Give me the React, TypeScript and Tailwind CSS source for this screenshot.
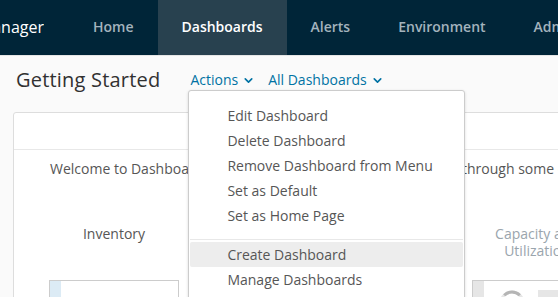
import { ChevronDown } from 'lucide-react'

const navItems = ['Home', 'Dashboards', 'Alerts', 'Environment', 'Administration']

const menuTop = ['Edit Dashboard', 'Delete Dashboard', 'Remove Dashboard from Menu', 'Set as Default', 'Set as Home Page']
const menuBottom = ['Create Dashboard', 'Manage Dashboards']

const tiles = [
  { title: 'Inventory', muted: false, strip: 'bg-[#dcebf5]' },
  { title: 'Workload Balance', muted: false, strip: 'bg-[#dcebf5]' },
  { title: 'Troubleshooting', muted: false, strip: 'bg-[#dcebf5]' },
  { title: 'Capacity and Utilization', muted: true, strip: 'bg-[#e6e6e6]' },
]

export default function App() {
  return (
    <div className="w-[558px] h-[297px] overflow-hidden bg-[#fafafa] font-['Open_Sans',sans-serif]">
      <header className="flex h-14 items-stretch bg-[#002538] border-b border-[#e5e5e5]">
        <div className="flex w-[44px] justify-end items-center overflow-hidden shrink-0 pb-[2px]">
          <span className="whitespace-nowrap text-[16px] text-white">Operations Manager</span>
        </div>
        <nav className="flex ml-[25px] whitespace-nowrap">
          {navItems.map(item => (
            <div
              key={item}
              className={`flex items-center px-6 pb-[2px] text-[14px] font-semibold ${
                item === 'Dashboards' ? 'bg-[#28414f] text-white' : 'text-[#a3b3bd]'
              }`}
            >
              {item}
            </div>
          ))}
        </nav>
      </header>

      <div className="flex items-start h-14 pl-4 pt-[10px]">
        <h1 className="text-[20px] leading-[28px] text-[#313131] tracking-[0.2px]">Getting Started</h1>
        <div className="relative ml-[30px] mt-[4px] flex items-center gap-[13px] text-[14px] leading-[20px] text-[#0072a3]">
          <button className="flex items-center gap-1">
            Actions <ChevronDown size={13} strokeWidth={3} />
          </button>
          <button className="flex items-center gap-1">
            All Dashboards <ChevronDown size={13} strokeWidth={3} />
          </button>

          <div className="absolute left-[-2px] top-[20px] z-10 w-[277px] rounded-[3px] border border-[#cccccc] bg-white pt-3 pb-3 shadow-[0_1px_3px_rgba(0,0,0,0.15)]">
            {menuTop.map(item => (
              <div key={item} className="flex items-center h-[25px] pl-[38px] text-[14px] text-[#565656]">
                {item}
              </div>
            ))}
            <div className="mt-[11px] mb-[2px] mx-px h-px bg-[#e8e8e8]" />
            {menuBottom.map((item, i) => (
              <div
                key={item}
                className={`flex items-center h-[25px] mx-px rounded-[2px] pl-[37px] text-[14px] text-[#565656] ${
                  i === 0 ? 'bg-[#ededed]' : ''
                }`}
              >
                {item}
              </div>
            ))}
          </div>
        </div>
      </div>

      <div className="ml-[13px] w-[600px] rounded-[3px] border border-[#dddddd] bg-white">
        <div className="h-[37px] border-b border-[#e8e8e8]" />
        <p className="pl-[36px] pt-[8px] text-[14px] text-[#565656] whitespace-nowrap">
          Welcome to Dashboards. Here we will walk you all step by step through some of the key dashboards.
        </p>
        <div className="mt-[45px] ml-[35px] flex gap-[11px]">
          {tiles.map(tile => (
            <div key={tile.title} className="w-[130px] shrink-0">
              <div
                className={`h-[50px] text-center text-[14px] leading-[17px] ${
                  tile.muted ? 'text-[#9aa5ad]' : 'text-[#565656]'
                } pt-[1px]`}
              >
                {tile.title}
              </div>
              <div className="mt-[6px] flex h-[40px] border border-[#cccccc]">
                <div className={`w-[11px] ${tile.strip}`} />
                {tile.muted && (
                  <div className="flex flex-1 items-start pt-[8px] pl-[14px] gap-[12px]">
                    <svg width="28" height="28" viewBox="0 0 28 28">
                      <circle cx="14" cy="14" r="11" fill="none" stroke="#e6e6e6" strokeWidth="3" />
                      <path d="M6.2 6.2 A11 11 0 0 1 21.8 6.2" fill="none" stroke="#b5b5b5" strokeWidth="3" />
                    </svg>
                    <div className="mt-[1px] h-[10px] w-[20px] bg-[#e6e6e6]" />
                  </div>
                )}
              </div>
            </div>
          ))}
        </div>
      </div>
    </div>
  )
}
